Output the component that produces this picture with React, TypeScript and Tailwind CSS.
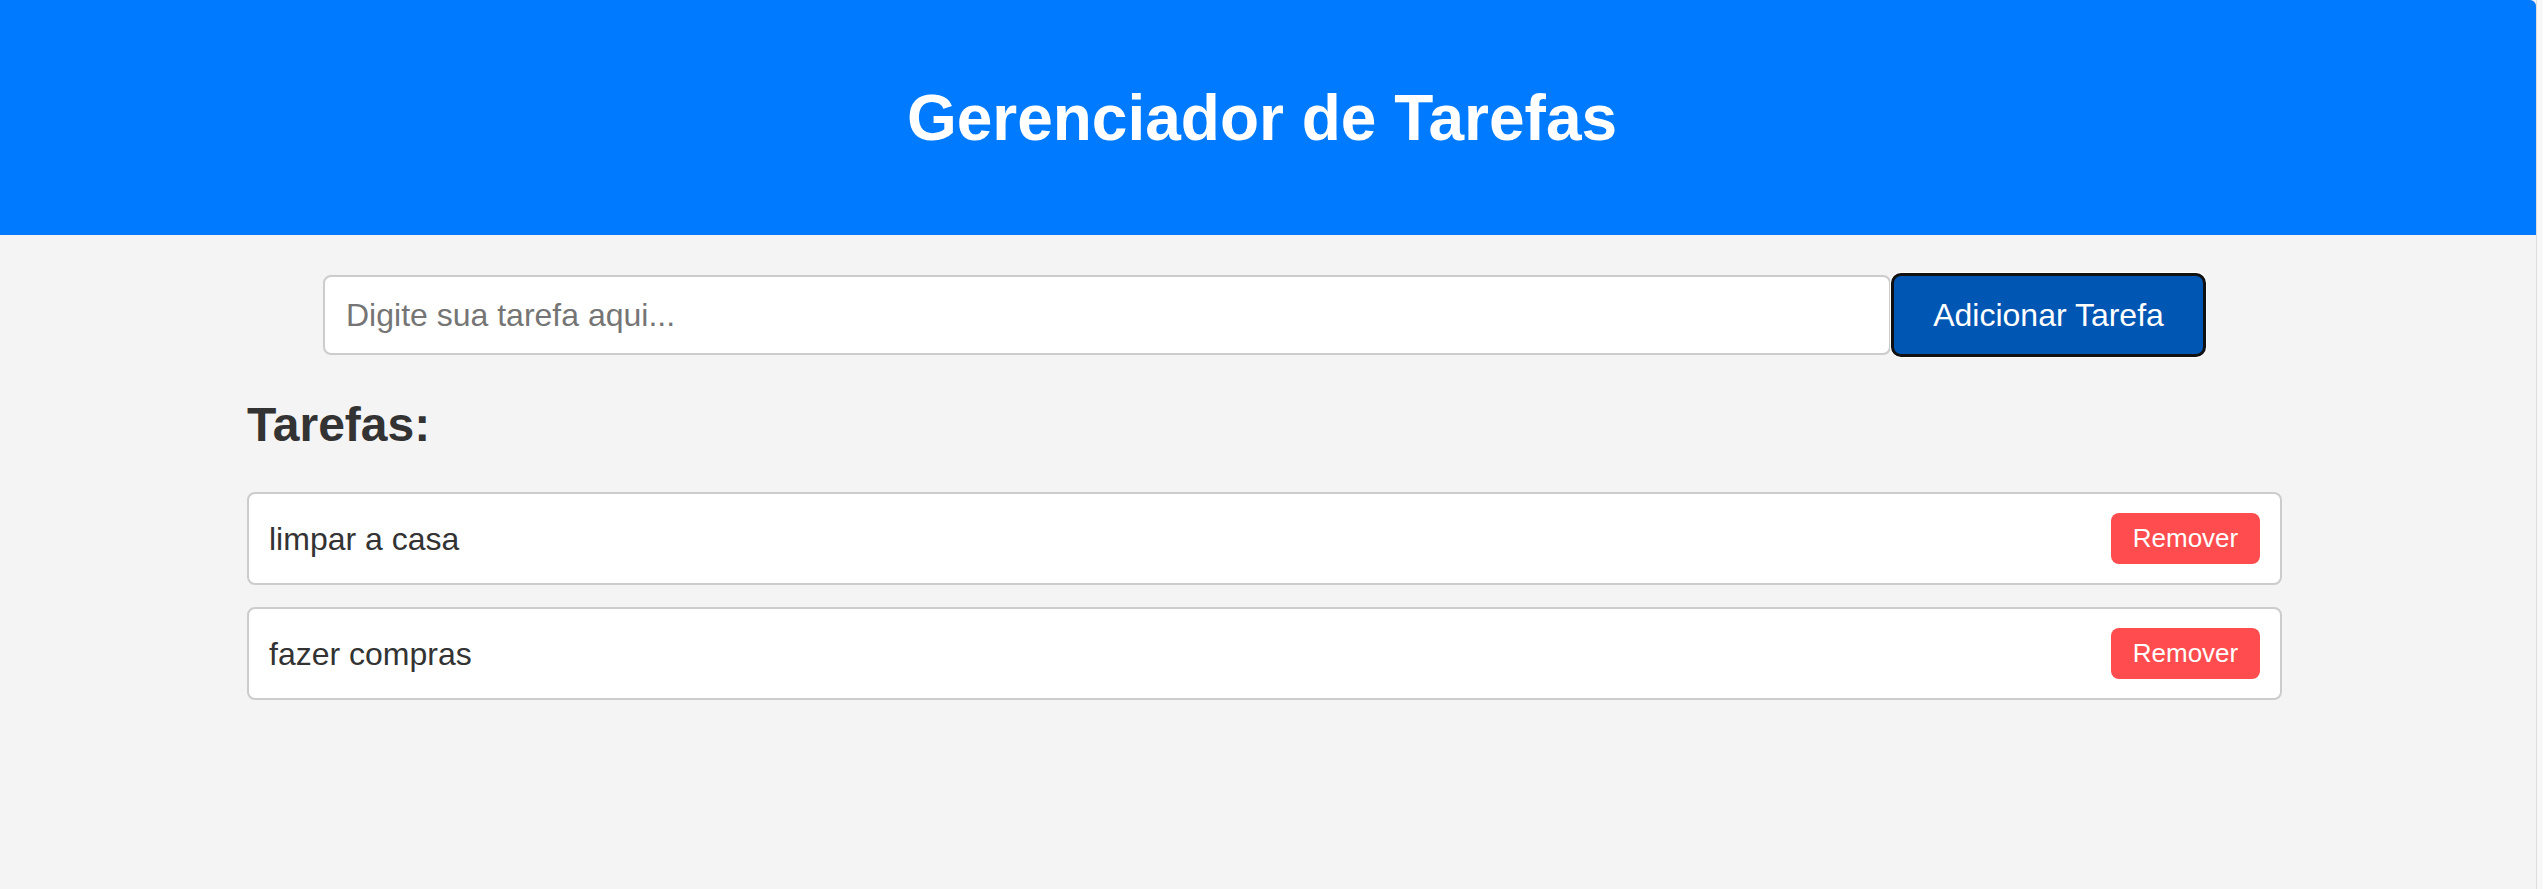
import { useState } from "react";

interface Task {
  id: number;
  text: string;
}

export default function App() {
  const [tasks, setTasks] = useState<Task[]>([
    { id: 1, text: "limpar a casa" },
    { id: 2, text: "fazer compras" },
  ]);
  const [input, setInput] = useState("");

  const addTask = () => {
    if (!input.trim()) return;
    setTasks([...tasks, { id: Date.now(), text: input.trim() }]);
    setInput("");
  };

  return (
    <div
      className="flex min-h-[889px] bg-[#f8f8f8]"
      style={{ fontFamily: '"Liberation Sans", Arial, sans-serif' }}
    >
      <div className="w-[2536px] shrink-0 bg-[#f4f4f4]">
        <header className="h-[235px] bg-[#007bff] rounded-tr-[6px] flex items-center justify-center pr-[12px]">
          <h1 className="text-[64px] font-bold text-white leading-none">Gerenciador de Tarefas</h1>
        </header>

        <main className="w-[2035px] ml-[247px] pt-[38px] pb-10">
          <div className="flex justify-center items-center h-[84px]">
            <input
              value={input}
              onChange={(e) => setInput(e.target.value)}
              placeholder="Digite sua tarefa aqui..."
              className="w-[1568px] h-[80px] bg-white border-2 border-[#cccccc] rounded-[8px] pl-[21px] text-[32px] text-[#333] placeholder:text-[#757575] focus:outline-none"
            />
            <button
              onClick={addTask}
              className="w-[315px] h-[84px] bg-[#0056b3] border-[3px] border-[#111111] rounded-[10px] shadow-[0_0_0_1px_#ffffff] text-white text-[32px]"
            >
              Adicionar Tarefa
            </button>
          </div>

          <h2 className="mt-[41px] text-[48px] leading-[54px] font-bold text-[#333333]">Tarefas:</h2>

          <ul className="mt-[40px] flex flex-col gap-[22px]">
            {tasks.map((task) => (
              <li
                key={task.id}
                className="h-[93px] bg-white border-2 border-[#cccccc] rounded-[8px] px-[20px] flex items-center justify-between"
              >
                <span className="text-[32px] text-[#333333]">{task.text}</span>
                <button
                  onClick={() => setTasks(tasks.filter((t) => t.id !== task.id))}
                  className="w-[149px] h-[51px] bg-[#ff4d4f] rounded-[8px] text-white text-[26px]"
                >
                  Remover
                </button>
              </li>
            ))}
          </ul>
        </main>
      </div>
      <div className="w-px bg-[#dddddd]" />
    </div>
  );
}
